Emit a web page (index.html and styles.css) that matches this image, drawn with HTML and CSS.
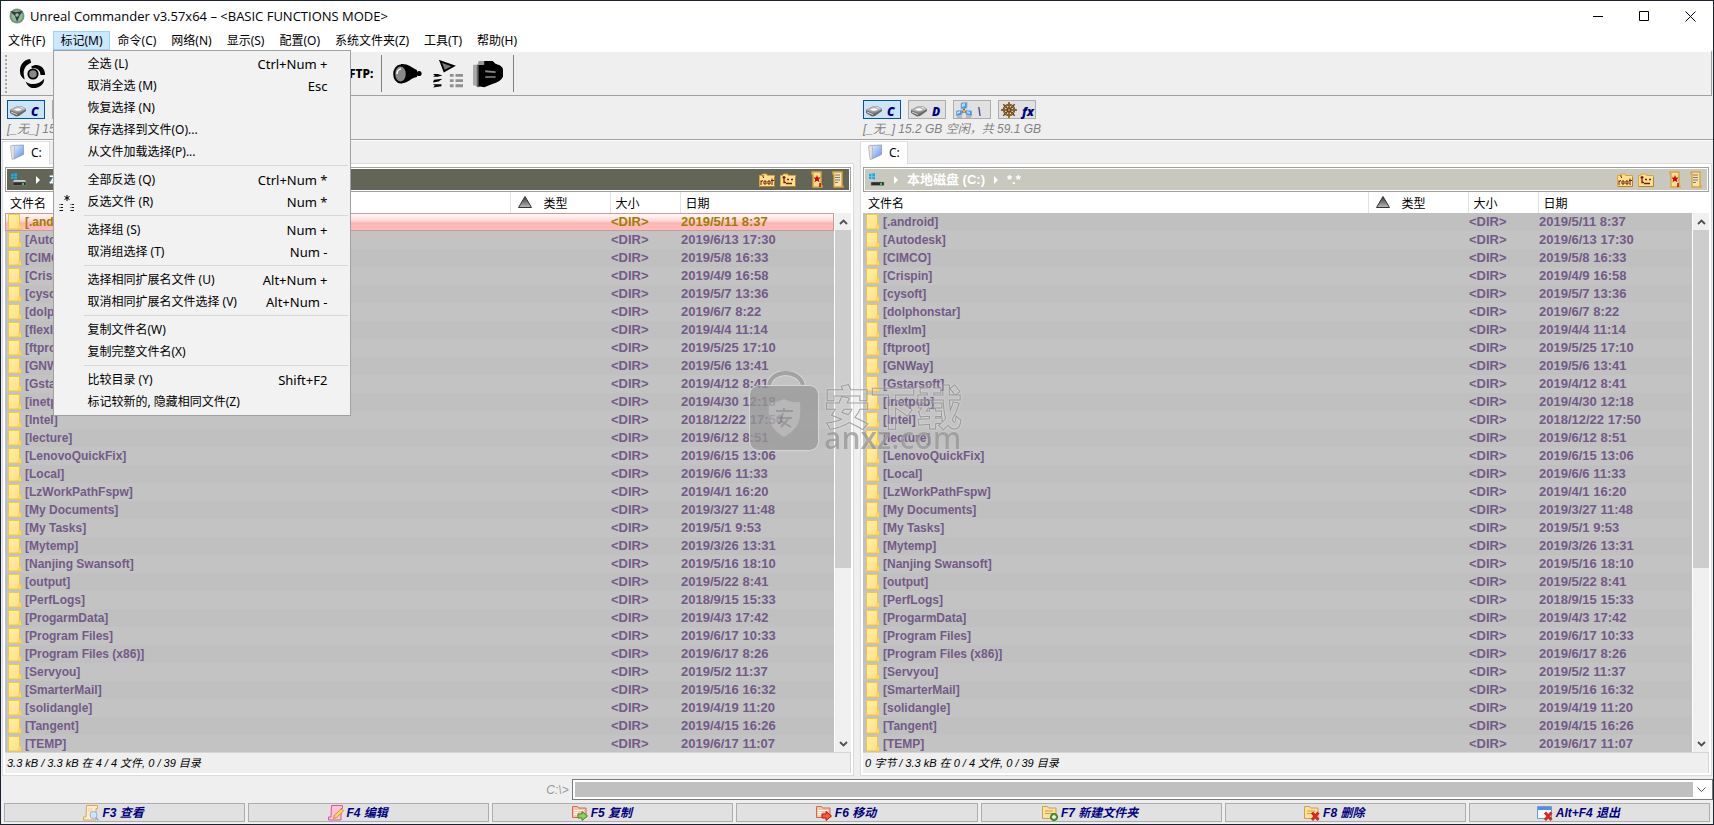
FILE: index.html
```html
<!DOCTYPE html>
<html lang="zh-CN">
<head>
<meta charset="utf-8">
<title>Unreal Commander</title>
<link rel="stylesheet" href="styles.css">
</head>
<body>
<svg class="defs" width="0" height="0" aria-hidden="true">
  <defs>
    <linearGradient id="gFolder" x1="0" y1="0" x2="1" y2="1"><stop offset="0" stop-color="#ffefae"/><stop offset="1" stop-color="#ffdf7c"/></linearGradient>
    <linearGradient id="gMetal" x1="0" y1="0" x2="0" y2="1"><stop offset="0" stop-color="#f4f4f4"/><stop offset="1" stop-color="#777"/></linearGradient>
    <linearGradient id="gBlue" x1="0" y1="0" x2="1" y2="1"><stop offset="0" stop-color="#eaf4ff"/><stop offset="1" stop-color="#5f8ff0"/></linearGradient>
    <linearGradient id="gSort" x1="0" y1="0" x2="0" y2="1"><stop offset="0" stop-color="#333"/><stop offset="1" stop-color="#bbb"/></linearGradient>
  </defs>
  <symbol id="folder" viewBox="0 0 14 16"><path d="M.5.5h11v14.500H.5z" fill="url(#gFolder)" stroke="#f0c93f"/><path d="M11.500 10.500h1.500v5h-2v-4z" fill="#ffe28a" stroke="#edc43a" stroke-width=".8"/></symbol>
  <symbol id="drive" viewBox="0 0 16 11"><path d="M0 4l7-3.500h5L16 3v2l-7 5-3 .5L0 7z" fill="#666"/><path d="M0 4l7-3.500h5L16 3 8 7.500z" fill="url(#gMetal)" stroke="#999" stroke-width=".5"/><ellipse cx="8" cy="3.500" rx="4" ry="1.800" fill="#fff" stroke="#8a8a8a" stroke-width=".8"/><path d="M1 6l6 2.500" stroke="#ddd" stroke-width="1"/></symbol>
  <symbol id="net" viewBox="0 0 16 16"><path d="M8 6v4M4 11l4-2 4 2" stroke="#555" stroke-width="2" fill="none"/><path d="M5 1l6-1v6l-6 1zM0 9l6-1v5l-6 1zM10 8l6 1v5l-6-1z" fill="#4f93e8" stroke="#9db3cc" stroke-width=".8"/><path d="M6 2l3-1v3l-3 1zM1 10l3-1v2l-3 1zM11 9l3 1v2l-3-1z" fill="#a9e2ff"/><path d="M1 15h5M10 15h5" stroke="#aaa" stroke-width="1.500"/><circle cx="8" cy="9" r="1.300" fill="#e0b030"/></symbol>
  <symbol id="wheel" viewBox="0 0 16 16"><g fill="none" stroke="#6b4313"><path d="M8 0v16M0 8h16M2.300 2.300l11.400 11.400M13.700 2.300L2.300 13.700" stroke-width="1.400"/><circle cx="8" cy="8" r="5.200" stroke-width="2"/></g><circle cx="8" cy="8" r="5.200" fill="none" stroke="#c79a5b" stroke-width=".6"/><circle cx="8" cy="8" r="2" fill="#b5854a" stroke="#5a360c"/></symbol>
  <symbol id="tabfolder" viewBox="0 0 14 16"><path d="M2 1.500L13.500 1v9.500L4 15z" fill="url(#gBlue)" stroke="#8e9bb5" stroke-width=".8"/><path d="M.5 2L3 1l1.500 2L4 15l-2 .5z" fill="#e4e4e4" stroke="#aaa" stroke-width=".7"/></symbol>
  <symbol id="disk" viewBox="0 0 16 13"><path d="M0 1l2.500-.4V3H0zM3.200.5L6 0v3H3.200zM0 3.600h2.500V6L0 5.700zM3.200 3.600H6v2.800l-2.800-.3z" fill="#14aef0"/><path d="M3 7h11l1 2H2z" fill="#ccc"/><path d="M2 9h13v3.500H2z" fill="#2c2c2c" stroke="#999" stroke-width=".5"/><path d="M11 11h2" stroke="#3dff5a" stroke-width="1.500"/></symbol>
  <symbol id="arrow" viewBox="0 0 4 8"><path d="M0 0l4 4-4 4z" fill="#fff"/></symbol>
  <symbol id="root" viewBox="0 0 16 14"><path d="M.5 2.500h2l1-1.500h4l1 1.500h7v11H.5z" fill="#ffe08a" stroke="#d9a63a"/><path d="M1 13.500h14.500V4" stroke="#b5822b" fill="none"/><path d="M4 2v2l1 1M2 12V7.500M2 8.500l2-1M5 8h2v3H5zM9 8h2v3H9zM13 5.500V12M12 7.500h3" fill="none" stroke="#6a1d10"/></symbol>
  <symbol id="up" viewBox="0 0 16 14"><path d="M.5 2.500h2l1-1.500h4l1 1.500h7v11H.5z" fill="#ffe08a" stroke="#d9a63a"/><path d="M1 13.500h14.500V4" stroke="#b5822b" fill="none"/><path d="M4 3v6.500h2M2.500 4.500h3M7 6.500h2M11 6.500h2M6 10.500h6" fill="none" stroke="#6a1d10" stroke-width="1.300"/></symbol>
  <symbol id="star" viewBox="0 0 12 17"><path d="M1 1h9v14h1v1H2V3H1z" fill="#f7dc9c" stroke="#dba43a" stroke-width="1.400"/><path d="M6 4l1 2.500h2.500L7.700 8.500l.8 2.800L6 9.700l-2.500 1.600.8-2.800L2.500 6.500H5z" fill="#d00808"/><path d="M9 12v4" stroke="#a00" stroke-width="1.400"/></symbol>
  <symbol id="scroll" viewBox="0 0 12 17"><path d="M1 1h9v14h1v1H2V3H1z" fill="#f7e3ae" stroke="#dba43a" stroke-width="1.400"/><path d="M3 4h5M3 6.500h5M3 9h5M3 11.500h3" stroke="#777"/></symbol>
  <symbol id="chevup" viewBox="0 0 9 6"><path d="M1 5l3.500-3.500L8 5" fill="none" stroke="#505050" stroke-width="1.800"/></symbol>
  <symbol id="chevdown" viewBox="0 0 9 6"><path d="M1 1l3.500 3.500L8 1" fill="none" stroke="#505050" stroke-width="1.800"/></symbol>
  <symbol id="sort" viewBox="0 0 14 12"><path d="M7 .5l6.500 11H.5z" fill="url(#gSort)" stroke="#333"/></symbol>
  <symbol id="view" viewBox="0 0 16 16"><path d="M3.500.5h11v3H13v11.500H.5v-3H3z" fill="#fdecce" stroke="#dba25c"/><path d="M5 4h5M5 6h5" stroke="#efcf9d"/><circle cx="10.500" cy="10" r="3.500" fill="#cfe6f8" stroke="#8ab4d8"/><path d="M13 12.500l2.500 3" stroke="#8ab4d8" stroke-width="1.500"/></symbol>
  <symbol id="edit" viewBox="0 0 16 16"><path d="M3.500.5h11v3H13v11.500H.5v-3H3z" fill="#fbc4dc" stroke="#d65a92"/><path d="M5.500 13.500l1-3.500 7-6 2 2-7 6.500z" fill="#ffd45a" stroke="#b98320" stroke-width=".8"/></symbol>
  <symbol id="copy" viewBox="0 0 16 16"><path d="M.5 1.500h5l1 1.500h7.500v9.500H.5z" fill="#f8c4ac" stroke="#cf6b4a"/><path d="M2 5.500h10M2 7.500h4M2 9.500h3" stroke="#fff"/><path d="M6 9h4V6.500l5.500 4.500-5.500 4.500V13H6z" fill="#8ed05a" stroke="#3f8a22"/></symbol>
  <symbol id="move" viewBox="0 0 16 16"><path d="M.5 1.500h5l1 1.500h7.500v9.500H.5z" fill="#f8c4ac" stroke="#cf6b4a"/><path d="M2 5.500h10M2 7.500h4M2 9.500h3" stroke="#fff"/><path d="M6 9h4V6.500l5.500 4.500-5.500 4.500V13H6z" fill="#ff5a38" stroke="#b11c0a"/></symbol>
  <symbol id="newdir" viewBox="0 0 16 16"><path d="M.5 1.500h5l1 1.500h7.500v10.500H.5z" fill="#f8e2a0" stroke="#c9a24a"/><path d="M3 6h8M3 8.500h8" stroke="#c9a24a"/><circle cx="12" cy="12" r="3.500" fill="#5da832" stroke="#356e18"/><path d="M12 10v4M10 12h4" stroke="#fff" stroke-width="1.300"/></symbol>
  <symbol id="del" viewBox="0 0 16 16"><path d="M.5 1.500h5l1 1.500h7.500v10.500H.5z" fill="#f8e2a0" stroke="#c9a24a"/><path d="M3 6h8M3 8.500h8" stroke="#c9a24a"/><path d="M8 7.500l6.500 7.500M14.500 7.500L8 15" stroke="#e02418" stroke-width="2.800"/></symbol>
  <symbol id="exit" viewBox="0 0 16 16"><path d="M.5 1.500h14v12H.5z" fill="#f4f9ff" stroke="#6b9bd8"/><path d="M1 2h13v3H1z" fill="#4f8fe6"/><path d="M8 7.500l6.500 7.500M14.500 7.500L8 15" stroke="#e02418" stroke-width="2.800"/></symbol>
</svg>

<div class="window">
  <header class="titlebar">
    <svg class="app-icon" viewBox="0 0 16 16"><circle cx="8" cy="8" r="7.500" fill="#6f9a7a"/><circle cx="8" cy="8" r="5.500" fill="#94b79b"/><path d="M1 3l6 1 7-1-3 4-3 7-2-6z" fill="#333b3a"/><circle cx="8" cy="7" r="1.800" fill="#9fb8ae"/></svg>
    <h1 class="title">Unreal Commander v3.57x64 – &lt;BASIC FUNCTIONS MODE&gt;</h1>
    <div class="win-buttons">
      <button aria-label="最小化"><svg viewBox="0 0 11 11"><path d="M0 5.500h10" stroke="#000"/></svg></button>
      <button aria-label="最大化"><svg viewBox="0 0 11 11"><path d="M.5.500h9v9h-9z" fill="none" stroke="#000"/></svg></button>
      <button aria-label="关闭"><svg viewBox="0 0 11 11"><path d="M.5.500l10 10M10.500.5l-10 10" stroke="#000" fill="none"/></svg></button>
    </div>
  </header>

  <nav class="menubar">
    <button>文件(F)</button>
    <div class="menu-open">
      <button class="active">标记(M)</button>
      <div class="popup" role="menu">
        <button role="menuitem"><span>全选 (L)</span><kbd>Ctrl+Num +</kbd></button>
        <button role="menuitem"><span>取消全选 (M)</span><kbd>Esc</kbd></button>
        <button role="menuitem"><span>恢复选择 (N)</span></button>
        <button role="menuitem"><span>保存选择到文件(O)...</span></button>
        <button role="menuitem"><span>从文件加载选择(P)...</span></button>
        <hr>
        <button role="menuitem"><span>全部反选 (Q)</span><kbd>Ctrl+Num *</kbd></button>
        <button role="menuitem"><svg class="menu-icon" viewBox="0 0 16 16"><path d="M8 0v6M5.500 1.500l5 3M10.500 1.500l-5 3" stroke="#000"/><path d="M0 9.500h4M0 12.500h4M0 15.500h4M11 9.500h4M11 12.500h4M11 15.500h4" stroke="#888"/><path d="M2 9.500h2M2 12.500h2M1 15.500h3M13 9.500h2M13 12.500h2M12 15.500h3" stroke="#111"/></svg><span>反选文件 (R)</span><kbd>Num *</kbd></button>
        <hr>
        <button role="menuitem"><span>选择组 (S)</span><kbd>Num +</kbd></button>
        <button role="menuitem"><span>取消组选择 (T)</span><kbd>Num -</kbd></button>
        <hr>
        <button role="menuitem"><span>选择相同扩展名文件 (U)</span><kbd>Alt+Num +</kbd></button>
        <button role="menuitem"><span>取消相同扩展名文件选择 (V)</span><kbd>Alt+Num -</kbd></button>
        <hr>
        <button role="menuitem"><span>复制文件名(W)</span></button>
        <button role="menuitem"><span>复制完整文件名(X)</span></button>
        <hr>
        <button role="menuitem"><span>比较目录 (Y)</span><kbd>Shift+F2</kbd></button>
        <button role="menuitem"><span>标记较新的, 隐藏相同文件(Z)</span></button>
      </div>
    </div>
    <button>命令(C)</button>
    <button>网络(N)</button>
    <button>显示(S)</button>
    <button>配置(O)</button>
    <button>系统文件夹(Z)</button>
    <button>工具(T)</button>
    <button>帮助(H)</button>
  </nav>

  <div class="toolbar">
    <i class="grip"></i>
    <button class="tool tool-refresh" aria-label="刷新"><svg viewBox="0 0 30 32"><path d="M12 0C5 1 1 6 1 13c0 4 2 7 5 9 0-2-1-4-1-7 0-5 3-9 8-11z"/><path d="M13 8c6-4 15-1 15 9h-5c0-5-4-8-9-7z"/><path d="M7 24c6 5 15 3 20-3 0 7-6 10-11 10-4 0-7-2-9-7z"/><circle cx="15" cy="16" r="5" fill="#888" stroke="#000" stroke-width="2"/></svg></button>
    <button class="tool-ftp">FTP:</button>
    <i class="rule"></i>
    <button class="tool" aria-label="查找"><svg viewBox="0 0 30 20"><path d="M8 0c7-.5 10 3 16 6v7c-6 1-9 6-16 6.500z"/><circle cx="26" cy="9.500" r="2.600"/><ellipse cx="7.500" cy="10" rx="6.300" ry="8.500" fill="#888" stroke="#000" stroke-width="2"/><path d="M4 10c0-3 2-5 4-5" stroke="#fff" stroke-width="1.500" fill="none"/></svg></button>
    <button class="tool" aria-label="批量重命名"><svg viewBox="0 0 32 30"><path d="M8 1.500l14 5L12 12z" fill="#777" stroke="#000" stroke-width="2"/><path d="M0 15h5l5 1.500-5 1.500H0l2-1.500zM1 21l9-1-4 3-6 1zM0 26h9v2l-9 1.500 2-2z"/><path d="M18 16.500h4M24 16.500h8M18 22h4M24 22h8M18 27.500h4M24 27.500h8" stroke="#909090" stroke-width="3"/></svg></button>
    <button class="tool" aria-label="比较"><svg viewBox="0 0 32 30"><path d="M0 5h5v23l-5-1z" fill="#aaa"/><path d="M4 5h3v24H4z" fill="#666"/><path d="M6 5h5V1h10l3 3 5 2q3 2 3 5v7q-2 5-12 8l-8 3-6-1z"/><path d="M6 1h6v4H5z" fill="#999"/><path d="M13 11l11 1v2l-11-1zM13 17.500h11V19H13z" fill="#888"/></svg></button>
    <i class="rule"></i>
  </div>

  <div class="drives" id="drives"></div>

  <main class="panes" id="panes"></main>

  <div class="command">
    <label for="cmd">C:\&gt;</label>
    <div class="combo"><input id="cmd" type="text"><button aria-label="历史"><svg viewBox="0 0 9 6"><path d="M.5.500l4 4 4-4" fill="none" stroke="#555"/></svg></button></div>
  </div>

  <footer class="fkeys">
    <button><svg><use href="#view"/></svg>F3 查看</button>
    <button><svg><use href="#edit"/></svg>F4 编辑</button>
    <button><svg><use href="#copy"/></svg>F5 复制</button>
    <button><svg><use href="#move"/></svg>F6 移动</button>
    <button><svg><use href="#newdir"/></svg>F7 新建文件夹</button>
    <button><svg><use href="#del"/></svg>F8 删除</button>
    <button><svg><use href="#exit"/></svg>Alt+F4 退出</button>
  </footer>

  <div class="watermark" aria-hidden="true">
    <svg viewBox="0 0 70 80"><path d="M20 14c3-16 30-16 34 0" fill="none" stroke="#ddd" stroke-width="6"/><path d="M20 14c3-16 30-16 34 0" fill="none" stroke="#999" stroke-width="4"/><rect x=".5" y="14.500" width="69" height="65" rx="9" fill="#999" stroke="#ddd"/><path d="M20 31c6 1 11-1 15-3 4 2 10 4 16 3 1 17 0 26-16 35-15-9-16-18-15-35z" fill="#b4b4b4"/><path d="M27 40h17M35 37v3M29 47h14M34 42l-4 11M40 47l-8 9M32 50l10 6" stroke="#8d8d8d" stroke-width="2" fill="none"/></svg>
    <div class="wm-text"><b>安下载</b><span>anxz.com</span></div>
  </div>
</div>
<script src="script.js"></script>
</body>
</html>
```
FILE: styles.css
```css
* { box-sizing: border-box; }
html, body { height: 100%; }
body {
  margin: 0;
  background: #efefef;
  color: #000;
  font: 12px/16px "Noto Sans", "Noto Sans CJK SC", sans-serif;
  overflow: hidden;
}
button {
  margin: 0;
  padding: 0;
  border: 0;
  background: none;
  color: inherit;
  font: inherit;
}
svg { display: block; flex: none; }
.defs { position: absolute; }

.window {
  position: relative;
  display: flex;
  flex-direction: column;
  height: 100vh;
  border: 1px solid #1b2233;
  background: #efefef;
}

/* title bar */
.titlebar {
  display: flex;
  align-items: center;
  height: 30px;
  padding-left: 8px;
  background: #fff;
}
.app-icon { width: 16px; height: 16px; }
.title {
  margin: 0 auto 0 5px;
  font-family: "Open Sans", sans-serif;
  font-size: 13px;
  font-weight: 400;
}
.win-buttons { display: flex; height: 28px; }
.win-buttons button { display: grid; place-items: center; width: 46px; }
.win-buttons svg { width: 11px; height: 11px; }

/* menu bar */
.menubar {
  display: flex;
  gap: 1px;
  height: 19px;
  background: #fff;
}
.menubar > button, .menu-open > button {
  height: 19px;
  padding: 0 7px;
  white-space: nowrap;
}
.menu-open { position: relative; }
.menu-open > .active {
  background: #cce8ff;
  box-shadow: inset 0 0 0 1px #99d1ff;
}
.popup {
  position: absolute;
  z-index: 5;
  top: 100%;
  left: 0;
  width: 298px;
  padding: 2px;
  border: 1px solid #a0a0a0;
  background: #f2f2f2;
}
.popup button {
  position: relative;
  display: flex;
  justify-content: space-between;
  align-items: center;
  width: 100%;
  height: 22px;
  padding: 0 21px 0 31px;
  white-space: nowrap;
}
.popup kbd { font: inherit; font-size: 13px; }
.popup hr {
  height: 1px;
  margin: 2px 0 3px 28px;
  border: 0;
  background: #d7d7d7;
}
.menu-icon { position: absolute; left: 3px; top: 4px; width: 16px; height: 16px; }

/* toolbar */
.toolbar {
  display: flex;
  align-items: center;
  height: 46px;
  margin-right: 1px;
  border-top: 2px solid #fff;
  border-right: 1px solid #a0a0a0;
  border-bottom: 1px solid #a0a0a0;
}
.grip {
  width: 2px;
  height: 38px;
  margin: 0 12px 0 4px;
  background: repeating-linear-gradient(#a8a8a8 0 2px, transparent 2px 4px);
}
.rule { width: 1px; height: 37px; margin: 0 0 0 8px; background: #808080; }
.tool { width: 32px; margin-left: 8px; }
.tool svg { width: 30px; height: 30px; }
.tool-refresh { margin: 0 298px 0 0; }
.tool-refresh svg { width: 28px; height: 32px; }
.tool-ftp { font-weight: 800; line-height: 20px; }
.rule + .tool { margin-left: 11px; }

/* drive buttons */
.drives {
  display: grid;
  grid-template-columns: 1fr 1fr;
  gap: 6px;
  height: 44px;
  padding: 4px 0 0 6px;
  border-bottom: 1px solid #a0a0a0;
}
.drive-list { display: flex; gap: 7px; }
.drive-list button {
  display: flex;
  align-items: center;
  gap: 5px;
  width: 38px;
  height: 19px;
  padding: 4px 0 0 2px;
  border: 1px solid #adadad;
  background: #e1e1e1;
  color: #000080;
  font: italic 800 12px/14px "Open Sans", sans-serif;
}
.drive-list .on { border-color: #00549a; background: #cce4f7; }
.drive-list svg { width: 16px; height: 11px; }
.drive-list .tall svg { height: 16px; margin-top: -3px; }
.drive-list .thin { font-weight: 400; }
.free {
  margin: 2px 0 0;
  color: #828282;
  font: italic 12px/16px "Liberation Sans", "Noto Sans CJK SC", sans-serif;
}

/* panes */
.panes {
  flex: 1;
  display: grid;
  grid-template-columns: 1fr 1fr;
  gap: 6px;
  min-height: 0;
  padding: 0 1px;
  border-top: 1px solid #fff;
}
.pane {
  display: flex;
  flex-direction: column;
  min-width: 0;
  min-height: 0;
}
.tabs { display: flex; height: 22px; }
.tabs button {
  display: flex;
  gap: 7px;
  width: 48px;
  height: 23px;
  padding: 2px 0 0 7px;
  border: 1px solid #dcdcdc;
  border-bottom: 0;
  background: #fff;
  z-index: 1;
}
.tabs svg { width: 14px; height: 16px; }
.tabs span { margin-top: 1px; }
.page {
  flex: 1;
  display: flex;
  flex-direction: column;
  min-height: 0;
  padding: 3px 2px 2px;
  border: 1px solid #dcdcdc;
  background: #fff;
}
.path {
  display: flex;
  align-items: center;
  height: 25px;
  padding: 0 6px 0 5px;
  border: 1px solid #a0a0a0;
  outline: 1px solid #fff;
  outline-offset: -2px;
  background: #c8c8be;
  color: #fff;
  font: bold 13px/20px "Liberation Sans", "Noto Sans CJK SC", sans-serif;
}
.active-pane .path { background: #636556; }
.path .crumb { display: flex; align-items: center; margin-right: auto; gap: 9px; }
.path .disk { width: 16px; height: 13px; }
.path .arr { width: 4px; height: 8px; }
.path nav { display: flex; align-items: center; gap: 5px; }
.path nav svg { width: 16px; height: 14px; }
.path nav .tall { width: 12px; height: 17px; }
.path nav button:nth-child(3) { margin-left: 10px; }
.path nav button:nth-child(4) { margin-left: 4px; }

.list { flex: 1; display: flex; min-height: 0; overflow: hidden; }
table {
  flex: 1;
  align-self: flex-start;
  table-layout: fixed;
  border-collapse: collapse;
}
.c-type { width: 100px; }
.c-size { width: 70px; }
.c-date { width: 154px; }
th {
  height: 21px;
  padding: 2px 0 0 5px;
  border-right: 1px solid #e2e2e2;
  font-weight: 400;
  text-align: left;
}
th:last-child { border: 0; }
th:nth-child(2) { padding-left: 7px; }
.sorted { display: flex; align-items: center; gap: 12px; }
.sorted svg { width: 14px; height: 12px; margin-top: -4px; }
td {
  height: 18px;
  padding: 0 1px;
  font: bold 13px/18px "Liberation Sans", sans-serif;
  white-space: nowrap;
}
tbody tr { background: #c0c0c0; color: #735a88; }
tbody tr:nth-child(even) { background: #c3c3c3; }
tbody .cursor {
  background: linear-gradient(#fff, #ffd6d6 45%, #ffb4b4 55%, #ffbcbc);
  outline: 1px solid #c99a9a;
  outline-offset: -1px;
  color: #a07d00;
}
.name {
  display: flex;
  align-items: center;
  gap: 3px;
  padding-left: 2px;
  font-size: 12px;
}
.name svg { width: 14px; height: 16px; }

.side { display: flex; flex-direction: column; width: 17px; padding: 21px 0 0 1px; }
.side button { display: grid; place-items: center; height: 17px; background: #f0f0f0; }
.side svg { width: 9px; height: 6px; }
.thumb { flex: 67; background: #cdcdcd; }
.track { flex: 33; background: #f0f0f0; }

.status {
  height: 21px;
  padding-left: 2px;
  border-top: 1px solid #d5d5d5;
  border-right: 1px solid #d5d5d5;
  background: #efefef;
  font: italic 11px/20px "Liberation Sans", "Noto Sans CJK SC", sans-serif;
}

/* command line */
.command {
  display: flex;
  align-items: center;
  justify-content: flex-end;
  gap: 3px;
  margin-top: 3px;
}
.command label {
  flex: 1;
  text-align: right;
  color: #999;
  font: italic 12px/16px "Liberation Sans", sans-serif;
}
.combo {
  display: flex;
  flex: 2;
  height: 21px;
  padding: 2px;
  border: 1px solid #7a7a7a;
  background: #fff;
}
.combo input { flex: 1; min-width: 0; border: 0; padding: 0 2px; background: #c0c0c0; }
.combo button { display: grid; place-items: center; width: 17px; }
.combo svg { width: 9px; height: 6px; }

/* function keys */
.fkeys {
  display: flex;
  gap: 3px;
  padding: 3px 3px 2px;
}
.fkeys button {
  display: flex;
  flex: 1;
  align-items: center;
  justify-content: center;
  gap: 3px;
  height: 19px;
  padding-right: 22px;
  border: 1px solid #adadad;
  background: #e1e1e1;
  color: #000080;
  font: italic bold 12px/16px "Liberation Sans", "Noto Sans CJK SC", sans-serif;
}
.fkeys svg { width: 16px; height: 16px; }

/* watermark */
.watermark {
  position: absolute;
  z-index: 4;
  top: 370px;
  left: 748px;
  display: flex;
  gap: 5px;
  opacity: .75;
  pointer-events: none;
}
.watermark > svg { width: 70px; height: 80px; }
.wm-text { display: flex; flex-direction: column; padding-top: 10px; }
.wm-text b {
  height: 42px;
  color: transparent;
  font: 900 46px/46px "Noto Sans CJK SC", sans-serif;
  -webkit-text-stroke: 1px #8c8c8c;
  filter: drop-shadow(0 0 1px #f2f2f2);
}
.wm-text span {
  color: #969696;
  font: 600 30px/30px "Open Sans", sans-serif;
  text-shadow: 0 0 1px #eee;
}
```
FILE: script.js
```js
const files = [
  ['.android', '2019/5/11 8:37'], ['Autodesk', '2019/6/13 17:30'], ['CIMCO', '2019/5/8 16:33'],
  ['Crispin', '2019/4/9 16:58'], ['cysoft', '2019/5/7 13:36'], ['dolphonstar', '2019/6/7 8:22'],
  ['flexlm', '2019/4/4 11:14'], ['ftproot', '2019/5/25 17:10'], ['GNWay', '2019/5/6 13:41'],
  ['Gstarsoft', '2019/4/12 8:41'], ['inetpub', '2019/4/30 12:18'], ['Intel', '2018/12/22 17:50'],
  ['lecture', '2019/6/12 8:51'], ['LenovoQuickFix', '2019/6/15 13:06'], ['Local', '2019/6/6 11:33'],
  ['LzWorkPathFspw', '2019/4/1 16:20'], ['My Documents', '2019/3/27 11:48'], ['My Tasks', '2019/5/1 9:53'],
  ['Mytemp', '2019/3/26 13:31'], ['Nanjing Swansoft', '2019/5/16 18:10'], ['output', '2019/5/22 8:41'],
  ['PerfLogs', '2018/9/15 15:33'], ['ProgarmData', '2019/4/3 17:42'], ['Program Files', '2019/6/17 10:33'],
  ['Program Files (x86)', '2019/6/17 8:26'], ['Servyou', '2019/5/2 11:37'], ['SmarterMail', '2019/5/16 16:32'],
  ['solidangle', '2019/4/19 11:20'], ['Tangent', '2019/4/15 16:26'], ['TEMP', '2019/6/17 11:07']
];

const icon = (id, cls = '') => `<svg class="${cls}"><use href="#${id}"/></svg>`;

const drives = () => `
  <section>
    <div class="drive-list">
      <button class="on">${icon('drive')}C</button>
      <button>${icon('drive')}D</button>
      <button class="tall thin">${icon('net')}\\</button>
      <button class="tall">${icon('wheel')}fx</button>
    </div>
    <p class="free">[_无_] 15.2 GB 空闲，共 59.1 GB</p>
  </section>`;

const pane = (active, status) => `
  <section class="pane ${active ? 'active-pane' : ''}">
    <div class="tabs"><button>${icon('tabfolder')}<span>C:</span></button></div>
    <div class="page">
      <div class="path">
        <div class="crumb">${icon('disk', 'disk')}${icon('arrow', 'arr')}<span>本地磁盘 (C:)</span>${icon('arrow', 'arr')}<span>*.*</span></div>
        <nav>
          <button aria-label="根目录">${icon('root')}</button>
          <button aria-label="上级">${icon('up')}</button>
          <button aria-label="收藏">${icon('star', 'tall')}</button>
          <button aria-label="历史">${icon('scroll', 'tall')}</button>
        </nav>
      </div>
      <div class="list">
        <table>
          <colgroup><col><col class="c-type"><col class="c-size"><col class="c-date"></colgroup>
          <thead><tr><th>文件名</th><th><div class="sorted">${icon('sort')}类型</div></th><th>大小</th><th>日期</th></tr></thead>
          <tbody>${files.map(([name, date], i) => `
            <tr class="${active && i === 0 ? 'cursor' : ''}"><td><div class="name">${icon('folder')}[${name}]</div></td><td></td><td>&lt;DIR&gt;</td><td>${date}</td></tr>`).join('')}
          </tbody>
        </table>
        <div class="side">
          <button aria-label="向上">${icon('chevup')}</button>
          <div class="thumb"></div><div class="track"></div>
          <button aria-label="向下">${icon('chevdown')}</button>
        </div>
      </div>
      <div class="status">${status}</div>
    </div>
  </section>`;

document.getElementById('drives').innerHTML = drives() + drives();
document.getElementById('panes').innerHTML =
  pane(true, '3.3 kB / 3.3 kB 在 4 / 4 文件, 0 / 39 目录') +
  pane(false, '0 字节 / 3.3 kB 在 0 / 4 文件, 0 / 39 目录');
```
